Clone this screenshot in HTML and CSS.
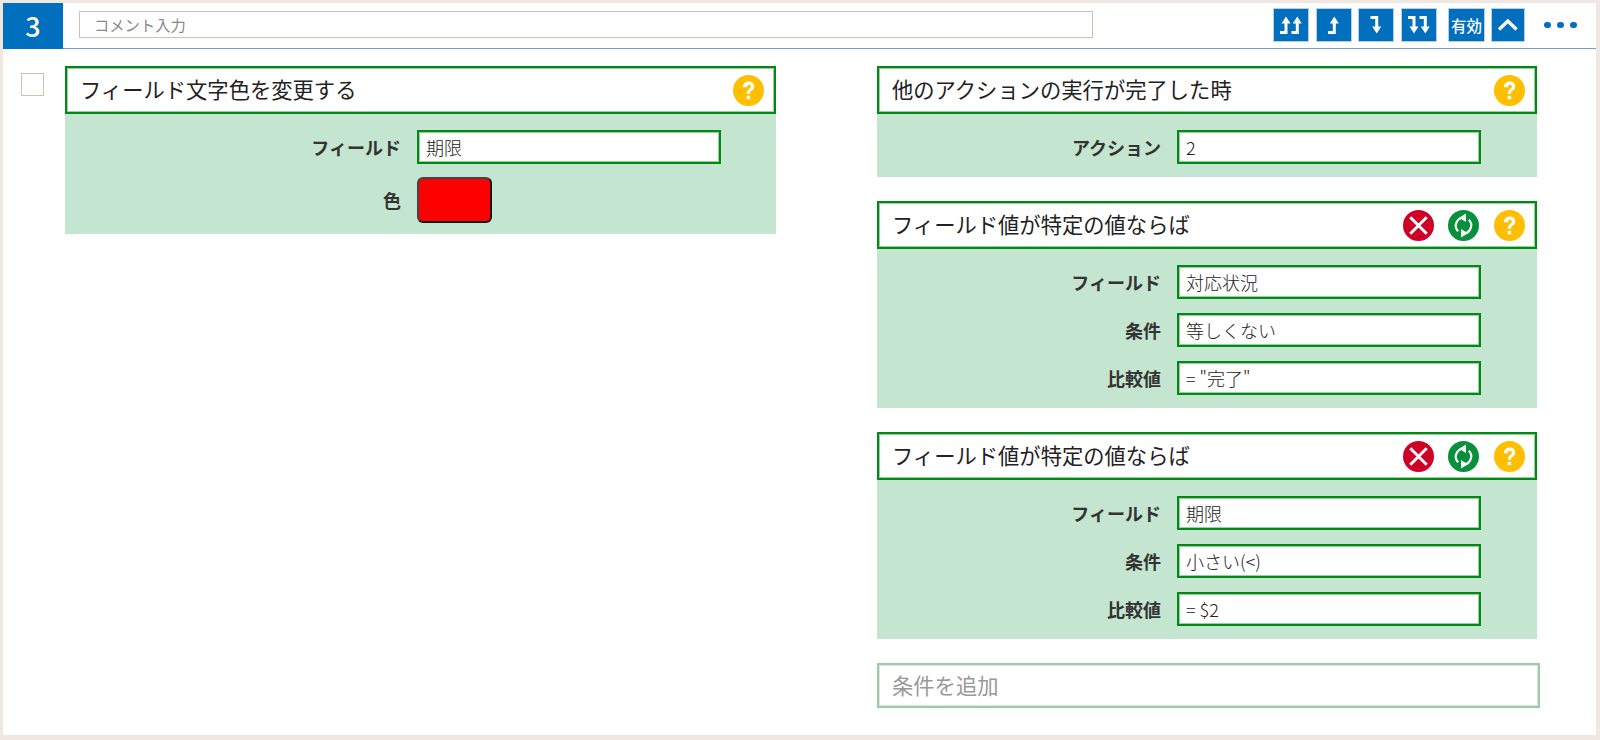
FILE: index.html
```html
<!DOCTYPE html>
<html lang="ja">
<head>
<meta charset="utf-8">
<title>アクション</title>
<link rel="stylesheet" href="styles.css">
</head>
<body>
<svg class="defs" aria-hidden="true">
  <defs>
    <symbol id="help" viewBox="0 0 32 32">
      <circle cx="16" cy="16" r="16" fill="#ffbe00"/>
      <path d="M10.2 12.6c0-3.400 2.500-5.800 5.900-5.800 3.400 0 5.800 2.100 5.800 5 0 2.200-1.100 3.400-2.700 4.500-1.300.9-1.600 1.500-1.600 3.100h-3.400c0-2.600.7-3.700 2.500-5 1.200-.9 1.700-1.500 1.700-2.500 0-1.100-.8-1.800-1.900-1.800-1.300 0-2.100.9-2.100 2.500z" fill="#fff"/>
      <rect x="14.100" y="21.400" width="3.600" height="3.600" fill="#fff"/>
    </symbol>
    <symbol id="remove" viewBox="0 0 32 32">
      <circle cx="16" cy="16" r="16" fill="#cf0025"/>
      <path d="M7.500 7.500l17 17M24.500 7.500l-17 17" stroke="#fff" stroke-width="3" fill="none"/>
    </symbol>
    <symbol id="swap" viewBox="0 0 32 32">
      <circle cx="16" cy="16" r="16" fill="#0a8f3c"/>
      <path d="M17 8a8.200 8.200 0 0 0-6.500 14M15 24a8.200 8.200 0 0 0 6.500-14" stroke="#fff" stroke-width="2.200" fill="none"/>
      <path d="M18.500 3.500V12.500L11.500 8zM13.500 28.500V19.500L20.500 24z" fill="#fff"/>
    </symbol>
  </defs>
</svg>
<div class="frame">
  <header class="bar">
    <div class="num">3</div>
    <div class="comment">コメント入力</div>
    <div class="tools">
      <button class="tool"><svg width="34" height="32" viewBox="0 0 34 32"><path d="M6 23.500H12V13M17.500 23.500h5.800V13" class="stroke"/><path d="M7.500 14.500l4.500-7 4.500 7zM18.800 14.500l4.500-7 4.500 7z" class="fill"/></svg></button>
      <button class="tool tool-b"><svg width="34" height="32" viewBox="0 0 34 32"><path d="M11 23.500h6.300V13" class="stroke"/><path d="M12.800 14.500l4.500-7 4.500 7z" class="fill"/></svg></button>
      <button class="tool"><svg width="34" height="32" viewBox="0 0 34 32"><path d="M11.500 8.500h6.200V19" class="stroke"/><path d="M13.200 17.500l4.500 7 4.500-7z" class="fill"/></svg></button>
      <button class="tool tool-d"><svg width="34" height="32" viewBox="0 0 34 32"><path d="M6 8.500H12V19M17.500 8.500h5.800V19" class="stroke"/><path d="M7.500 17.500l4.500 7 4.500-7zM18.800 17.500l4.500 7 4.500-7z" class="fill"/></svg></button>
      <button class="tool tool-text">有効</button>
      <button class="tool tool-up"><svg width="32" height="32" viewBox="0 0 32 32"><path d="M7 20.500l8.800-8.500 8.800 8.500" class="chev"/></svg></button>
      <div class="more"><i></i><i></i><i></i></div>
    </div>
  </header>
  <main class="content">
    <div class="check"></div>
    <section class="col-action">
      <div class="card">
        <div class="head"><span class="title">フィールド文字色を変更する</span><svg class="ico"><use href="#help"/></svg></div>
        <div class="body body-left">
          <div class="row"><label>フィールド</label><div class="field">期限</div></div>
          <div class="row row-color"><label>色</label><div class="color"></div></div>
        </div>
      </div>
    </section>
    <section class="col-cond">
      <div class="card">
        <div class="head"><span class="title">他のアクションの実行が完了した時</span><svg class="ico"><use href="#help"/></svg></div>
        <div class="body">
          <div class="row"><label>アクション</label><div class="field">2</div></div>
        </div>
      </div>
      <div class="card">
        <div class="head"><span class="title">フィールド値が特定の値ならば</span><svg class="ico"><use href="#remove"/></svg><svg class="ico"><use href="#swap"/></svg><svg class="ico"><use href="#help"/></svg></div>
        <div class="body">
          <div class="row"><label>フィールド</label><div class="field">対応状況</div></div>
          <div class="row"><label>条件</label><div class="field">等しくない</div></div>
          <div class="row"><label>比較値</label><div class="field">= "完了"</div></div>
        </div>
      </div>
      <div class="card">
        <div class="head"><span class="title">フィールド値が特定の値ならば</span><svg class="ico"><use href="#remove"/></svg><svg class="ico"><use href="#swap"/></svg><svg class="ico"><use href="#help"/></svg></div>
        <div class="body">
          <div class="row"><label>フィールド</label><div class="field">期限</div></div>
          <div class="row"><label>条件</label><div class="field">小さい(&lt;)</div></div>
          <div class="row"><label>比較値</label><div class="field">= $2</div></div>
        </div>
      </div>
      <div class="add">条件を追加</div>
    </section>
  </main>
</div>
</body>
</html>
```

FILE: styles.css
```css
* { box-sizing: border-box; }
html, body { margin: 0; height: 100%; }
body {
  background: #efe8e2;
  padding: 3px 4px 5px 3px;
  font-family: "Noto Sans CJK JP", "Noto Sans", sans-serif;
  color: #333;
  overflow: hidden;
}
.defs { display: none; }
.frame { background: #fff; height: 732px; }
.bar {
  display: flex;
  align-items: flex-start;
  height: 46px;
  border-bottom: 1px solid #6f9bd6;
}
.num {
  width: 60px;
  height: 46px;
  background: #006fbd;
  color: #fff;
  font-size: 27px;
  font-weight: 500;
  line-height: 45px;
  text-align: center;
}
.comment {
  width: 1014px;
  height: 27px;
  margin: 8px 0 0 16px;
  padding-left: 14px;
  border: 1px solid #cfc2b4;
  font-size: 15.3px;
  line-height: 24px;
  color: #8a8a8a;
}
.tools { display: flex; align-items: center; margin: 5px 0 0 180px; }
.tool {
  width: 36px;
  height: 34px;
  margin-right: 7px;
  padding: 0;
  border: 1px solid #b9cfe8;
  background: #006fbd;
  color: #fff;
  font-family: inherit;
  display: flex;
  align-items: center;
  justify-content: center;
}
.tool-b { margin-right: 6px; }
.tool-d { margin-right: 11px; }
.tool-text { width: 37px; font-size: 15.5px; font-weight: 500; margin-right: 6px; }
.tool-up { width: 34px; margin-right: 0; }
.stroke { fill: none; stroke: #fff; stroke-width: 3; }
.fill { fill: #fff; }
.chev { fill: none; stroke: #fff; stroke-width: 3.4; }
.more { display: flex; gap: 6.5px; margin-left: 19px; }
.more i { width: 6.5px; height: 6.5px; border-radius: 50%; background: #006fbd; }
.content { display: flex; align-items: flex-start; padding-top: 17px; }
.check {
  width: 23px;
  height: 23px;
  margin: 7px 0 0 18px;
  border: 1px solid #cfc2b4;
}
.col-action { width: 711px; margin-left: 21px; }
.col-cond { width: 663px; margin-left: 101px; }
.card { width: 660px; margin-bottom: 24px; }
.col-action .card { width: 711px; margin-bottom: 0; }
.head {
  display: flex;
  align-items: center;
  gap: 14.5px;
  height: 48px;
  padding: 0 10.5px 0 13px;
  border: 2px solid #008a14;
  box-shadow: inset 0 0 0 1px rgba(0, 138, 20, 0.4);
  background: #fff;
  color: #222;
  font-size: 21.3px;
}
.title { flex: 1; padding-bottom: 4px; }
.ico { width: 31px; height: 31px; flex: none; }
.body {
  display: flex;
  flex-direction: column;
  gap: 14px;
  background: #c4e5cf;
  padding: 16px 0 13px;
}
.body-left { gap: 13px; padding-bottom: 11px; }
.row { display: flex; align-items: center; height: 34px; }
.row-color { height: 46px; }
.row label {
  width: 300px;
  text-align: right;
  padding-right: 16px;
  font-size: 18px;
  font-weight: 700;
  color: #333;
}
.col-action .row label { width: 352px; }
.field {
  width: 304px;
  height: 34px;
  padding-left: 7px;
  border: 2px solid #008a14;
  box-shadow: inset 0 0 0 1px rgba(0, 138, 20, 0.4);
  background: #fff;
  font-size: 18px;
  line-height: 30px;
  font-weight: 300;
  color: #222;
}
.color {
  width: 75px;
  height: 46px;
  border: 2px solid #3a4a48;
  border-bottom-color: #111;
  border-right-color: #111;
  border-radius: 6px;
  background: #f00;
}
.add {
  width: 663px;
  height: 45px;
  padding-left: 13px;
  border: 2px solid #9ccba8;
  box-shadow: inset 0 0 0 1px rgba(156, 203, 168, 0.4);
  font-size: 21.3px;
  line-height: 39px;
  color: #999;
}
```
